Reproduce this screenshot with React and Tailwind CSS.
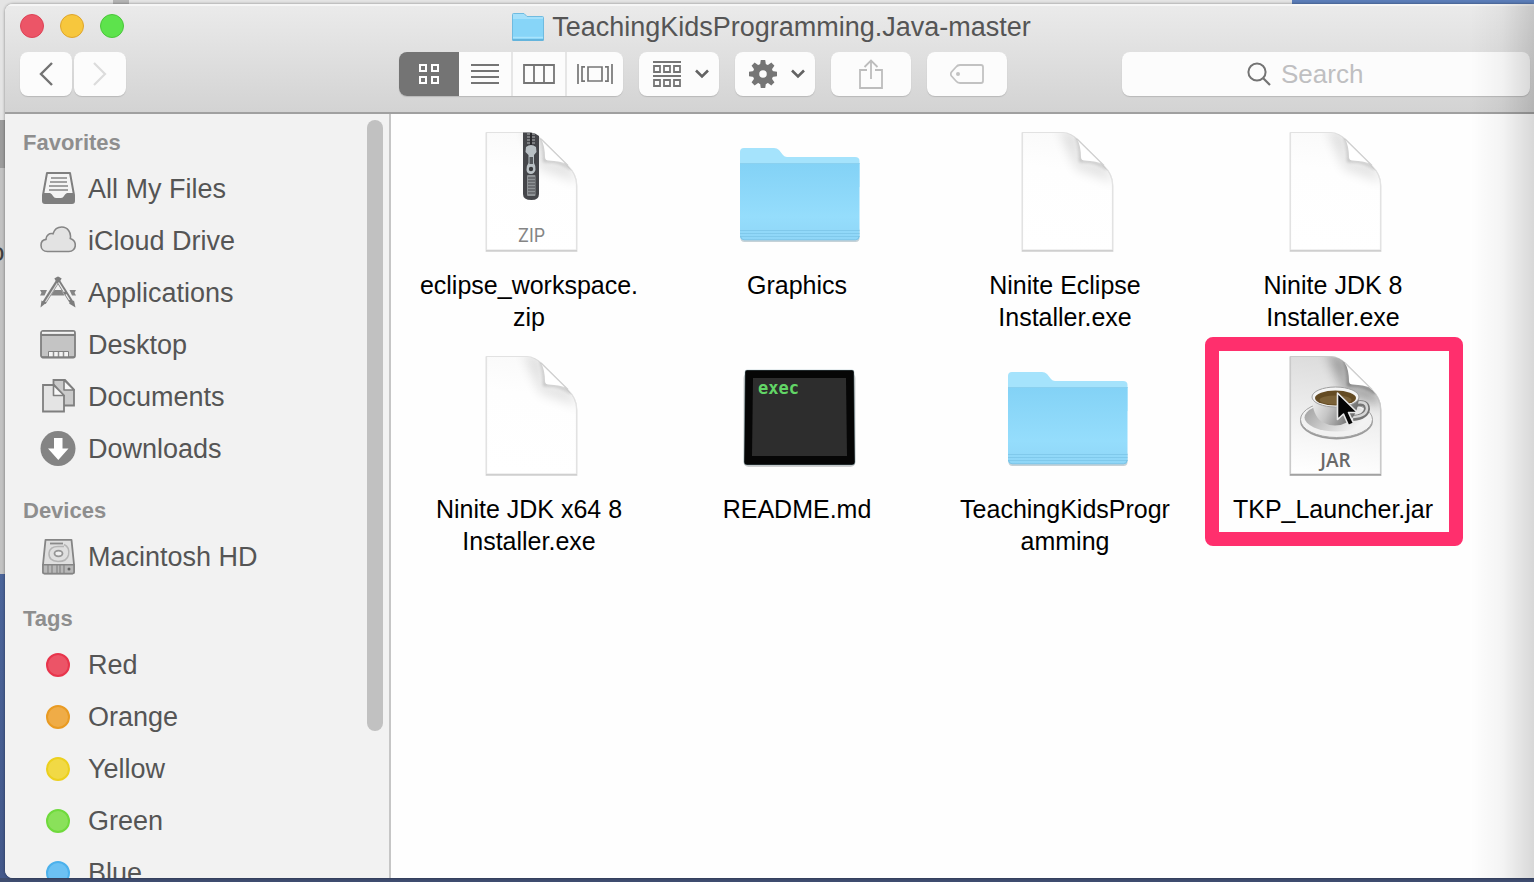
import React from "react";

const FONT = "font-['Liberation_Sans',Arial,sans-serif]";

/* ---------- sidebar icons ---------- */

function AllFilesIcon() {
  return (
    <svg width="36" height="36" viewBox="0 0 36 36" aria-hidden="true">
      <path d="M7 2H30L34 24V30Q34 32 32 32H5Q3 32 3 30V24Z" fill="#f4f4f4" stroke="#7f7f7f" strokeWidth="2" strokeLinejoin="round" />
      <path d="M3 22H10Q12 23 13 25Q14 27 16 27H21Q23 27 24 25Q25 23 27 22H34V30Q34 32 32 32H5Q3 32 3 30Z" fill="#7f7f7f" />
      <path d="M11 7H27M10 11H27M9 15H28M9 19H28" stroke="#858585" strokeWidth="1.600" />
    </svg>
  );
}

function CloudIcon() {
  return (
    <svg width="36" height="36" viewBox="0 0 36 36" aria-hidden="true">
      <path
        d="M7.500 28.500C3.500 28.500 1 25.800 1 22.200C1 19 3 16.800 6 16.400C5.800 12.500 9.300 9.800 13 10.800C14.300 6.500 17.500 4 21.800 4C27.500 4 31.500 9.300 30.300 15.500C33.500 16.500 35.300 19 35.300 22.200C35.300 25.800 32.500 28.500 28.800 28.500Z"
        fill="#e3e3e3"
        stroke="#868686"
        strokeWidth="1.6"
      />
    </svg>
  );
}

function ApplicationsIcon() {
  return (
    <svg width="36" height="36" viewBox="0 0 36 36" aria-hidden="true">
      <path d="M0 15H7L4.500 20.500H0L1.500 17.800ZM36 15H29.500L32 20.500H36L34.500 17.800Z" fill="#858585" />
      <path d="M11 20.500L14.500 15H21.500L24.500 20.500Z" fill="#858585" />
      <path d="M20 2.500L4 28" stroke="#7d7d7d" strokeWidth="4" />
      <path d="M18.500 6.500L5.500 27" stroke="#dcdcdc" strokeWidth="1.300" />
      <path d="M6 28L0.500 32.500L1.500 25.500Z" fill="#7d7d7d" />
      <path d="M16 2.500L32 28" stroke="#7d7d7d" strokeWidth="4" />
      <path d="M18.500 7.500L29.500 25" stroke="#ececec" strokeWidth="1.300" strokeDasharray="11 3" />
      <path d="M29 28.500L34 25.500L35.500 32.500Z" fill="#7d7d7d" />
    </svg>
  );
}

function DesktopIcon() {
  return (
    <svg width="36" height="36" viewBox="0 0 36 36" aria-hidden="true">
      <rect x="1" y="4" width="34" height="26.500" rx="2" fill="#c4c4c4" stroke="#7f7f7f" strokeWidth="1.800" />
      <path d="M2 5.800H34" stroke="#f3f3f3" strokeWidth="2" />
      <path d="M1 8H35" stroke="#7f7f7f" strokeWidth="1.800" />
      <path d="M8.500 30V24.500H28.500V30" fill="#f4f4f4" stroke="#7f7f7f" strokeWidth="1" />
      <path d="M13.500 25V30M18.500 25V30M23.500 25V30" stroke="#8f8f8f" strokeWidth="1.500" />
      <path d="M2 30.200H34" stroke="#7f7f7f" strokeWidth="1.800" />
    </svg>
  );
}

function DocumentsIcon() {
  return (
    <svg width="36" height="36" viewBox="0 0 36 36" aria-hidden="true">
      <path d="M13.500 1H25L34 10.500V26.500H13.500Z" fill="#cbcbcb" stroke="#7f7f7f" strokeWidth="1.800" />
      <path d="M24 1V11H34Z" fill="#f6f6f6" stroke="#7f7f7f" strokeWidth="1.600" strokeLinejoin="round" />
      <path d="M3 6H14L24 16.500V32.500H3Z" fill="#e4e4e4" stroke="#7f7f7f" strokeWidth="1.800" />
      <path d="M13.500 6V16.500H24Z" fill="#f8f8f8" stroke="#7f7f7f" strokeWidth="1.600" strokeLinejoin="round" />
    </svg>
  );
}

function DownloadsIcon() {
  return (
    <svg width="36" height="36" viewBox="0 0 36 36" aria-hidden="true">
      <circle cx="18" cy="17.500" r="17.500" fill="#848484" />
      <path d="M14 7H22.500V17.500H28.500L18.300 29L8 17.500H14Z" fill="#fff" />
    </svg>
  );
}

function HardDiskIcon() {
  return (
    <svg width="36" height="36" viewBox="0 0 36 36" aria-hidden="true">
      <path d="M5.500 0.900H31.500L34 25.500V33Q34 34.500 32.500 34.500H4.500Q3 34.500 3 33V25.500Z" fill="#dfdfdf" stroke="#858585" strokeWidth="1.800" strokeLinejoin="round" />
      <path d="M10 4.500H23" stroke="#8a8a8a" strokeWidth="1.800" />
      <path d="M24 5.500Q30 8 28.500 16Q27 22.500 18 22.500Q8.500 22 9 14Q10 7.500 18 7.500H24" fill="none" stroke="#b5b5b5" strokeWidth="1.500" />
      <ellipse cx="18.500" cy="14.500" rx="4" ry="2.800" fill="#eee" stroke="#959595" strokeWidth="1.800" />
      <path d="M3 25.800H34V33Q34 34.500 32.500 34.500H4.500Q3 34.500 3 33Z" fill="#b8b8b8" stroke="#858585" strokeWidth="1.600" />
      <path d="M8 26V34M12 26V34M17 26V34M20 26V34M24 26V34" stroke="#858585" strokeWidth="1.200" />
      <circle cx="29" cy="30" r="1.500" fill="#666" />
    </svg>
  );
}

function Dot({ className }) {
  return (
    <span className="flex w-9 justify-center">
      <span className={`size-6 rounded-full border-2 ${className}`} />
    </span>
  );
}

/* ---------- toolbar icons ---------- */

function Chevron() {
  return (
    <svg width="14" height="10" viewBox="0 0 14 10" aria-hidden="true">
      <path d="M1 1.500L7 7.500L13 1.500" fill="none" stroke="#636363" strokeWidth="2.600" />
    </svg>
  );
}

function GridViewIcon() {
  return (
    <svg width="20" height="20" viewBox="0 0 20 20" fill="none" stroke="#fff" strokeWidth="2" aria-hidden="true">
      <path d="M1 1H7V7H1ZM13 1H19V7H13ZM1 13H7V19H1ZM13 13H19V19H13Z" />
    </svg>
  );
}

function ListViewIcon() {
  return (
    <svg width="28" height="20" viewBox="0 0 28 20" aria-hidden="true">
      <path d="M0 1H28M0 7H28M0 13H28M0 19H28" stroke="#757575" strokeWidth="2" />
    </svg>
  );
}

function ColumnViewIcon() {
  return (
    <svg width="32" height="20" viewBox="0 0 32 20" aria-hidden="true">
      <path d="M1 1H31V19H1ZM11 1V19M21 1V19" fill="none" stroke="#757575" strokeWidth="1.800" />
    </svg>
  );
}

function CoverFlowIcon() {
  return (
    <svg width="36" height="20" viewBox="0 0 36 20" aria-hidden="true">
      <path d="M1 0V20M35 0V20M8 2.800H5V17.200H8M28 2.800H31V17.200H28M11 3H25V17H11Z" fill="none" stroke="#757575" strokeWidth="1.700" />
    </svg>
  );
}

function ArrangeIcon() {
  return (
    <svg width="28" height="26" viewBox="0 0 28 26" aria-hidden="true">
      <path d="M0 1H28M0 15H28" stroke="#757575" strokeWidth="2" />
      <path d="M1 5H7V11H1ZM11 5H17V11H11ZM21 5H27V11H21ZM1 19H7V25H1ZM11 19H17V25H11ZM21 19H27V25H21Z" fill="none" stroke="#757575" strokeWidth="1.800" />
    </svg>
  );
}

function GearIcon() {
  return (
    <svg width="28" height="28" viewBox="-14 -14 28 28" aria-hidden="true">
      <circle r="7" fill="none" stroke="#757575" strokeWidth="6.500" />
      {[0, 45, 90, 135, 180, 225, 270, 315].map((angle) => (
        <path key={angle} d="M-3 -9L-2.200 -14H2.200L3 -9Z" fill="#757575" transform={`rotate(${angle})`} />
      ))}
    </svg>
  );
}

function ShareIcon() {
  return (
    <svg width="24" height="30" viewBox="0 0 24 30" aria-hidden="true">
      <path d="M8 11H1V29H23V11H16M12 2V20M5.500 8L12 1.500L18.500 8" fill="none" stroke="#bdbdbd" strokeWidth="1.800" />
    </svg>
  );
}

function TagIcon() {
  return (
    <svg width="34" height="20" viewBox="0 0 34 20" aria-hidden="true">
      <path d="M10 1H31Q33 1 33 3V17Q33 19 31 19H10Q7.500 19 6 17L1.500 12Q0 10 1.500 8L6 3Q7.500 1 10 1Z" fill="none" stroke="#c2c2c2" strokeWidth="1.800" />
      <circle cx="8" cy="10" r="2" fill="#c2c2c2" />
    </svg>
  );
}

function SearchIcon() {
  return (
    <svg width="24" height="24" viewBox="0 0 24 24" aria-hidden="true">
      <circle cx="10" cy="10" r="8.600" fill="none" stroke="#747474" strokeWidth="2" />
      <path d="M16 16L23 23" stroke="#747474" strokeWidth="2.200" />
    </svg>
  );
}

/* ---------- file icons ---------- */

function PageShape({ id, dark }) {
  return (
    <>
      <defs>
        <linearGradient id={`${id}-body`} x1="0.300" y1="0" x2="0.200" y2="1">
          <stop offset="0" stopColor={dark ? "#dcdcdc" : "#fafafa"} />
          <stop offset={dark ? "0.750" : "0.300"} stopColor={dark ? "#f8f8f8" : "#fefefe"} />
          <stop offset="1" stopColor="#ffffff" />
        </linearGradient>
        <clipPath id={`${id}-clip`}>
          <path d="M22 6H62Q70 6 76 12L103 39Q111 47 111 58V122H22Z" />
        </clipPath>
        <filter id={`${id}-blur`} x="-60%" y="-60%" width="220%" height="220%">
          <feGaussianBlur stdDeviation="6" />
        </filter>
        <filter id={`${id}-edge`} x="-60%" y="-60%" width="220%" height="220%">
          <feGaussianBlur stdDeviation="1.5" />
        </filter>
      </defs>
      <path d="M20.500 5.500H62Q70 6 76 12L103 39Q112.500 47 112.500 59V125H20.500Z" fill="#000" opacity={dark ? "0.220" : "0.100"} />
      <path d="M21.500 5.500H62Q70 6 76 12L103 39Q111.500 47 111.500 58V123H21.500Z" fill={`url(#${id}-body)`} stroke={dark ? "#cacaca" : "#e2e2e2"} strokeWidth="1.200" />
      <g clipPath={`url(#${id}-clip)`}>
        <path d="M58 0L76 8L80 34L104 38L114 56L100 50L76 42L66 20Z" fill="#000" opacity={dark ? "0.340" : "0.120"} filter={`url(#${id}-blur)`} />
        <path d="M76 10Q79.500 20 79.500 34Q95 33 106 42" fill="none" stroke="#000" strokeWidth="2.500" opacity={dark ? "0.350" : "0.180"} filter={`url(#${id}-edge)`} />
      </g>
      <path d="M76 12L101 36.500Q95 34 84 33.500Q80 33.500 80 30Q80 19 76 12Z" fill="#fff" />
      <path d="M76 12L103 38.500" stroke="#cfcfcf" strokeWidth="1.200" />
      <path d="M21 123.800H112" stroke={dark ? "#a2a2a2" : "#cfcfcf"} strokeWidth="1.400" />
    </>
  );
}

function PageIcon({ id }) {
  return (
    <svg width="128" height="128" viewBox="0 0 128 128" aria-hidden="true">
      <PageShape id={id} />
    </svg>
  );
}

function ZipIcon({ id }) {
  return (
    <svg width="128" height="128" viewBox="0 0 128 128" aria-hidden="true">
      <PageShape id={id} />
      <path d="M58 5.500H66Q71 6 74 9V67Q74 73 66.500 73Q58 73 58 67Z" fill="#45464a" />
      <path d="M62 7H70M62 10H70M62 13H70M62 16H70" stroke="#8e9194" strokeWidth="1.400" />
      <path d="M66 6V18" stroke="#2b2b2e" strokeWidth="2" />
      <path d="M61 20Q66 16 71 20L71.500 25L69 28V36Q71 39 70.500 43Q69 47 66 47Q62 47 61.500 43Q61 39 63.500 36V28L60.500 25Z" fill="#b9c0c4" />
      <rect x="64.500" y="30" width="3.500" height="7" fill="#55585c" />
      <circle cx="66" cy="42" r="2.200" fill="#3a3b3e" />
      <rect x="62" y="48" width="8.500" height="21" rx="1" fill="#8f9396" />
      <path d="M63 51H70M63 54H70M63 57H70M63 60H70M63 63H70M63 66H70" stroke="#4a4b4f" strokeWidth="1.200" />
      <text x="66.500" y="115" textAnchor="middle" fontFamily="Inter, sans-serif" fontWeight="400" fontSize="18" fill="#858585">ZIP</text>
    </svg>
  );
}

function FolderIcon({ id }) {
  return (
    <svg width="128" height="128" viewBox="0 0 128 128" aria-hidden="true">
      <defs>
        <linearGradient id={id} x1="0" y1="0" x2="0" y2="1">
          <stop offset="0" stopColor="#83d2f6" />
          <stop offset="0.700" stopColor="#95ddfc" />
          <stop offset="1" stopColor="#8fd6f7" />
        </linearGradient>
      </defs>
      <rect x="7.500" y="100" width="119" height="15" rx="4" fill="#9fb4be" opacity="0.600" />
      <path d="M7 25Q7 21 11 21H41Q44 21 46 23L50 28Q51.500 30 54 30H122Q126.500 30 126.500 34V60H7Z" fill="#a5e3fc" />
      <path d="M7 36H126.500V109Q126.500 113 122.500 113H11Q7 113 7 109Z" fill={`url(#${id})`} />
      <path d="M7 36.500H126.500" stroke="#8ad0ef" strokeWidth="1" />
      <path d="M7 103.500H126.500M7 106.500H126.500M7 109.500H126.500" stroke="#80c9eb" strokeWidth="1" />
      <path d="M7.500 109Q8 112.800 11 112.800H122.500Q126 112.800 126 109" fill="none" stroke="#7cc4e6" strokeWidth="1" />
    </svg>
  );
}

function ExecIcon() {
  return (
    <svg width="128" height="128" viewBox="0 0 128 128" aria-hidden="true">
      <rect x="10.500" y="22" width="112" height="94" rx="5" fill="#000" opacity="0.180" />
      <path d="M14 19H119Q121 19 121 21L122 111Q122 114 119 114H14Q11 114 11 111L12 21Q12 19 14 19Z" fill="#060606" stroke="#8fb1b8" strokeOpacity="0.400" strokeWidth="1" />
      <path d="M20 27H113L114 105H19Z" fill="#2d2d2d" />
      <text x="25" y="43" fontFamily="'DejaVu Sans Mono', monospace" fontWeight="700" fontSize="17" fill="#62d566">exec</text>
    </svg>
  );
}

function JarIcon({ id }) {
  return (
    <svg width="128" height="128" viewBox="0 0 128 128" aria-hidden="true">
      <defs>
        <linearGradient id={`${id}-cup`} x1="0" y1="0" x2="1" y2="0.300">
          <stop offset="0" stopColor="#f3f3f3" />
          <stop offset="0.450" stopColor="#c6c6c6" />
          <stop offset="1" stopColor="#6e6e6e" />
        </linearGradient>
        <linearGradient id={`${id}-plate`} x1="0" y1="0" x2="1" y2="0.400">
          <stop offset="0" stopColor="#9b9b9b" />
          <stop offset="0.500" stopColor="#c9c9c9" />
          <stop offset="1" stopColor="#f2f2f2" />
        </linearGradient>
      </defs>
      <PageShape id={id} dark />
      <ellipse cx="67.500" cy="70" rx="36.500" ry="18.500" fill="#9a9a9a" />
      <ellipse cx="67.500" cy="68.500" rx="36" ry="18" fill="#f1f1f1" stroke="#a3a3a3" strokeWidth="1" />
      <ellipse cx="67.500" cy="66.500" rx="32" ry="14" fill={`url(#${id}-plate)`} />
      <path d="M86 53Q98 50 98 58Q97 66 84 67" fill="none" stroke="#757575" strokeWidth="6" />
      <path d="M86 52Q97.500 49 98 57Q98 65 84 66" fill="none" stroke="#d6d6d6" strokeWidth="2.500" />
      <path d="M43 45Q43 64 53 71Q66 78 79 71Q89 64 90 45Z" fill={`url(#${id}-cup)`} />
      <ellipse cx="66.500" cy="46" rx="23.500" ry="10" fill="#f5f5f5" stroke="#a0a0a0" strokeWidth="1" />
      <ellipse cx="66.500" cy="47" rx="20.500" ry="7.500" fill="#644b23" />
      <ellipse cx="66.500" cy="49" rx="16" ry="4.500" fill="#7b6238" />
      <text x="66.500" y="116" textAnchor="middle" fontFamily="'Open Sans', sans-serif" fontWeight="600" fontSize="19" fill="#696969">JAR</text>
    </svg>
  );
}

function Pointer() {
  return (
    <svg width="24" height="38" viewBox="0 0 24 38" aria-hidden="true">
      <path d="M1.500 2V28.500L7.500 23L12.500 34.500L17.500 32.200L12.500 21.500H21.500Z" fill="#050505" stroke="#e9e9e9" strokeWidth="1.600" strokeLinejoin="round" />
    </svg>
  );
}

/* ---------- data ---------- */

const sections = [
  {
    title: "Favorites",
    items: [
      { label: "All My Files", icon: <AllFilesIcon /> },
      { label: "iCloud Drive", icon: <CloudIcon /> },
      { label: "Applications", icon: <ApplicationsIcon /> },
      { label: "Desktop", icon: <DesktopIcon /> },
      { label: "Documents", icon: <DocumentsIcon /> },
      { label: "Downloads", icon: <DownloadsIcon /> },
    ],
  },
  { title: "Devices", items: [{ label: "Macintosh HD", icon: <HardDiskIcon /> }] },
  {
    title: "Tags",
    items: [
      { label: "Red", icon: <Dot className="border-[#e8354c] bg-[#ec5467]" /> },
      { label: "Orange", icon: <Dot className="border-[#e99b23] bg-[#efac47]" /> },
      { label: "Yellow", icon: <Dot className="border-[#ecd01e] bg-[#f1d945]" /> },
      { label: "Green", icon: <Dot className="border-[#6fda3c] bg-[#8ae15a]" /> },
      { label: "Blue", icon: <Dot className="border-[#4cb1ec] bg-[#6cc1f3]" /> },
    ],
  },
];

const files = [
  { lines: ["eclipse_workspace.", "zip"], icon: <ZipIcon id="zip" /> },
  { lines: ["Graphics"], icon: <FolderIcon id="graphics" /> },
  { lines: ["Ninite Eclipse", "Installer.exe"], icon: <PageIcon id="eclipse" /> },
  { lines: ["Ninite JDK 8", "Installer.exe"], icon: <PageIcon id="jdk" /> },
  { lines: ["Ninite JDK x64 8", "Installer.exe"], icon: <PageIcon id="jdk64" /> },
  { lines: ["README.md"], icon: <ExecIcon /> },
  { lines: ["TeachingKidsProgr", "amming"], icon: <FolderIcon id="tkp" /> },
  { lines: ["TKP_Launcher.jar"], icon: <JarIcon id="jar" />, highlighted: true },
];

/* ---------- parts ---------- */

const raised = "flex h-11 items-center justify-center bg-[#fcfcfc]";
const card = "rounded-lg shadow-[0_1px_1px_#b9b9b9]";

function Toolbar() {
  return (
    <div className="flex items-center pr-1 pl-[15px]">
      <div className="flex gap-[2px]">
        <button type="button" aria-label="Back" className={`${raised} ${card} w-[52px]`}>
          <svg width="16" height="26" viewBox="0 0 16 26" aria-hidden="true">
            <path d="M14 2L3 13L14 24" fill="none" stroke="#737373" strokeWidth="2.400" />
          </svg>
        </button>
        <button type="button" aria-label="Forward" className={`${raised} ${card} w-[52px]`}>
          <svg width="16" height="26" viewBox="0 0 16 26" aria-hidden="true">
            <path d="M2 2L13 13L2 24" fill="none" stroke="#dcdcdc" strokeWidth="2.200" />
          </svg>
        </button>
      </div>

      <div className={`${card} ml-[273px] flex gap-[2px] overflow-hidden bg-[#e6e6e6]`}>
        <button type="button" aria-label="Icon view" aria-pressed="true" className="-mr-[2px] flex h-11 w-[60px] items-center justify-center bg-[#747474]">
          <GridViewIcon />
        </button>
        <button type="button" aria-label="List view" className={`${raised} w-[52px]`}><ListViewIcon /></button>
        <button type="button" aria-label="Column view" className={`${raised} w-[52px]`}><ColumnViewIcon /></button>
        <button type="button" aria-label="Cover flow view" className={`${raised} w-14`}><CoverFlowIcon /></button>
      </div>

      <div className="ml-4 flex gap-4">
        <button type="button" aria-label="Arrange items" className={`${raised} ${card} w-20 gap-[14px] pl-1`}>
          <ArrangeIcon />
          <Chevron />
        </button>
        <button type="button" aria-label="Actions" className={`${raised} ${card} w-20 gap-[14px] pl-1`}>
          <GearIcon />
          <Chevron />
        </button>
        <button type="button" aria-label="Share" className={`${raised} ${card} w-20`}><ShareIcon /></button>
        <button type="button" aria-label="Edit tags" className={`${raised} ${card} w-20`}><TagIcon /></button>
      </div>

      <label className={`${raised} ${card} ml-[115px] min-w-0 flex-1 gap-[10px]`}>
        <SearchIcon />
        <input
          type="search"
          aria-label="Search"
          placeholder="Search"
          className="w-[124px] bg-transparent text-[26px] leading-8 text-[#4d4d4d] outline-none placeholder:text-[#bfbfc1]"
        />
      </label>
    </div>
  );
}

function Sidebar() {
  return (
    <aside className="relative w-[386px] shrink-0 overflow-hidden border-r-2 border-[#c6c6c6] bg-[#f2f2f2]">
      <nav className="flex flex-col gap-[14px] pt-[7px]">
        {sections.map((section) => (
          <section key={section.title}>
            <h2 className="flex h-[42px] items-center pl-[18px] text-[22px] font-bold text-[#8e8e8e]">{section.title}</h2>
            <ul>
              {section.items.map((item) => (
                <li key={item.label}>
                  <a href="#" className="flex h-[52px] items-center gap-3 pl-[35px] text-[27px] text-[#555]">
                    {item.icon}
                    {item.label}
                  </a>
                </li>
              ))}
            </ul>
          </section>
        ))}
      </nav>
      <div className="absolute top-[6px] right-[6px] h-4/5 w-4 rounded-full bg-[#c1c1c1]" />
    </aside>
  );
}

function FileTile({ file }) {
  return (
    <li className="relative">
      <button type="button" className="flex w-full flex-col items-center gap-[14px]">
        {file.icon}
        <span className="min-h-16 text-[25px] leading-8 text-black">
          {file.lines.map((line) => (
            <span key={line} className="block">{line}</span>
          ))}
        </span>
      </button>
      {file.highlighted && (
        <>
          <div className="absolute -top-[14px] right-1 left-[6px] h-[209px] rounded-lg border-[14px] border-[#ff2f6d]" />
          <div className="absolute top-10 left-[137px]"><Pointer /></div>
        </>
      )}
    </li>
  );
}

function Backdrop() {
  return (
    <div className="absolute inset-0 bg-linear-to-b from-[#5b7db8] to-[#43588a]" aria-hidden="true">
      <div className="flex h-[574px] w-[1292px] flex-col overflow-hidden bg-[#c2c2c2]">
        <div className="h-[120px] bg-[#e4e4e4] pl-[113px]">
          <div className="h-1 w-4 bg-[#b4b4b4]" />
        </div>
        <div className="h-12 bg-[#9c9c9c]" />
        <div className="-ml-[10px] pt-[68px] text-[26px] leading-8 text-[#3f3f3f]">o</div>
      </div>
      <div className="absolute inset-x-0 bottom-0 h-1 bg-[#3f4d70]" />
    </div>
  );
}

export default function App() {
  return (
    <div className={`relative flex h-screen overflow-hidden py-1 pl-[5px] ${FONT}`}>
      <Backdrop />
      <main className="relative flex min-w-0 flex-1 flex-col overflow-hidden rounded-l-lg bg-white shadow-[0_0_3px_rgba(0,0,0,0.45)]">
        <header className="shrink-0 border-b-2 border-[#a0a0a0] bg-linear-to-b from-[#ebebeb] to-[#d3d3d3] pb-4 shadow-[inset_0_2px_0_#f6f6f6]">
          <div className="mb-1 grid h-11 grid-cols-[1fr_auto_1fr] items-center pr-[11px] pl-[15px]">
            <div className="flex gap-4">
              <button type="button" aria-label="Close" className="size-6 rounded-full border border-[#dd4256] bg-[#ec5567]" />
              <button type="button" aria-label="Minimize" className="size-6 rounded-full border border-[#dfa52c] bg-[#f7c73d]" />
              <button type="button" aria-label="Zoom" className="size-6 rounded-full border border-[#4ac63a] bg-[#5de34c]" />
            </div>
            <div className="flex items-center gap-2 pt-[2px]">
              <svg width="32" height="28" viewBox="0 0 32 28" aria-hidden="true">
                <path d="M0.500 27V1.500Q0.500 0.500 1.500 0.500H12L15 3.500H30.500Q31.500 3.500 31.500 4.500V27Z" fill="#a5e0fa" stroke="#6fbbe0" />
                <path d="M1 6H31V27H1Z" fill="#87d5f8" />
                <path d="M1 24.500H31" stroke="#a9e4fc" strokeWidth="1.500" />
                <path d="M0.500 27H31.500" stroke="#64b4dc" strokeWidth="2" />
              </svg>
              <h1 className="text-[27px] leading-8 text-[#555]">TeachingKidsProgramming.Java-master</h1>
            </div>
          </div>
          <Toolbar />
        </header>

        <div className="flex min-h-0 flex-1">
          <Sidebar />
          <ul className="grid min-w-0 flex-1 grid-cols-[repeat(auto-fill,268px)] content-start gap-y-[18px] bg-[#fefefe] pt-[13px] pl-1">
            {files.map((file) => (
              <FileTile key={file.lines.join("")} file={file} />
            ))}
          </ul>
        </div>

        <div className="pointer-events-none absolute inset-y-0 right-0 w-16 bg-linear-to-r from-transparent via-black/4 to-black/15" />
      </main>
    </div>
  );
}
